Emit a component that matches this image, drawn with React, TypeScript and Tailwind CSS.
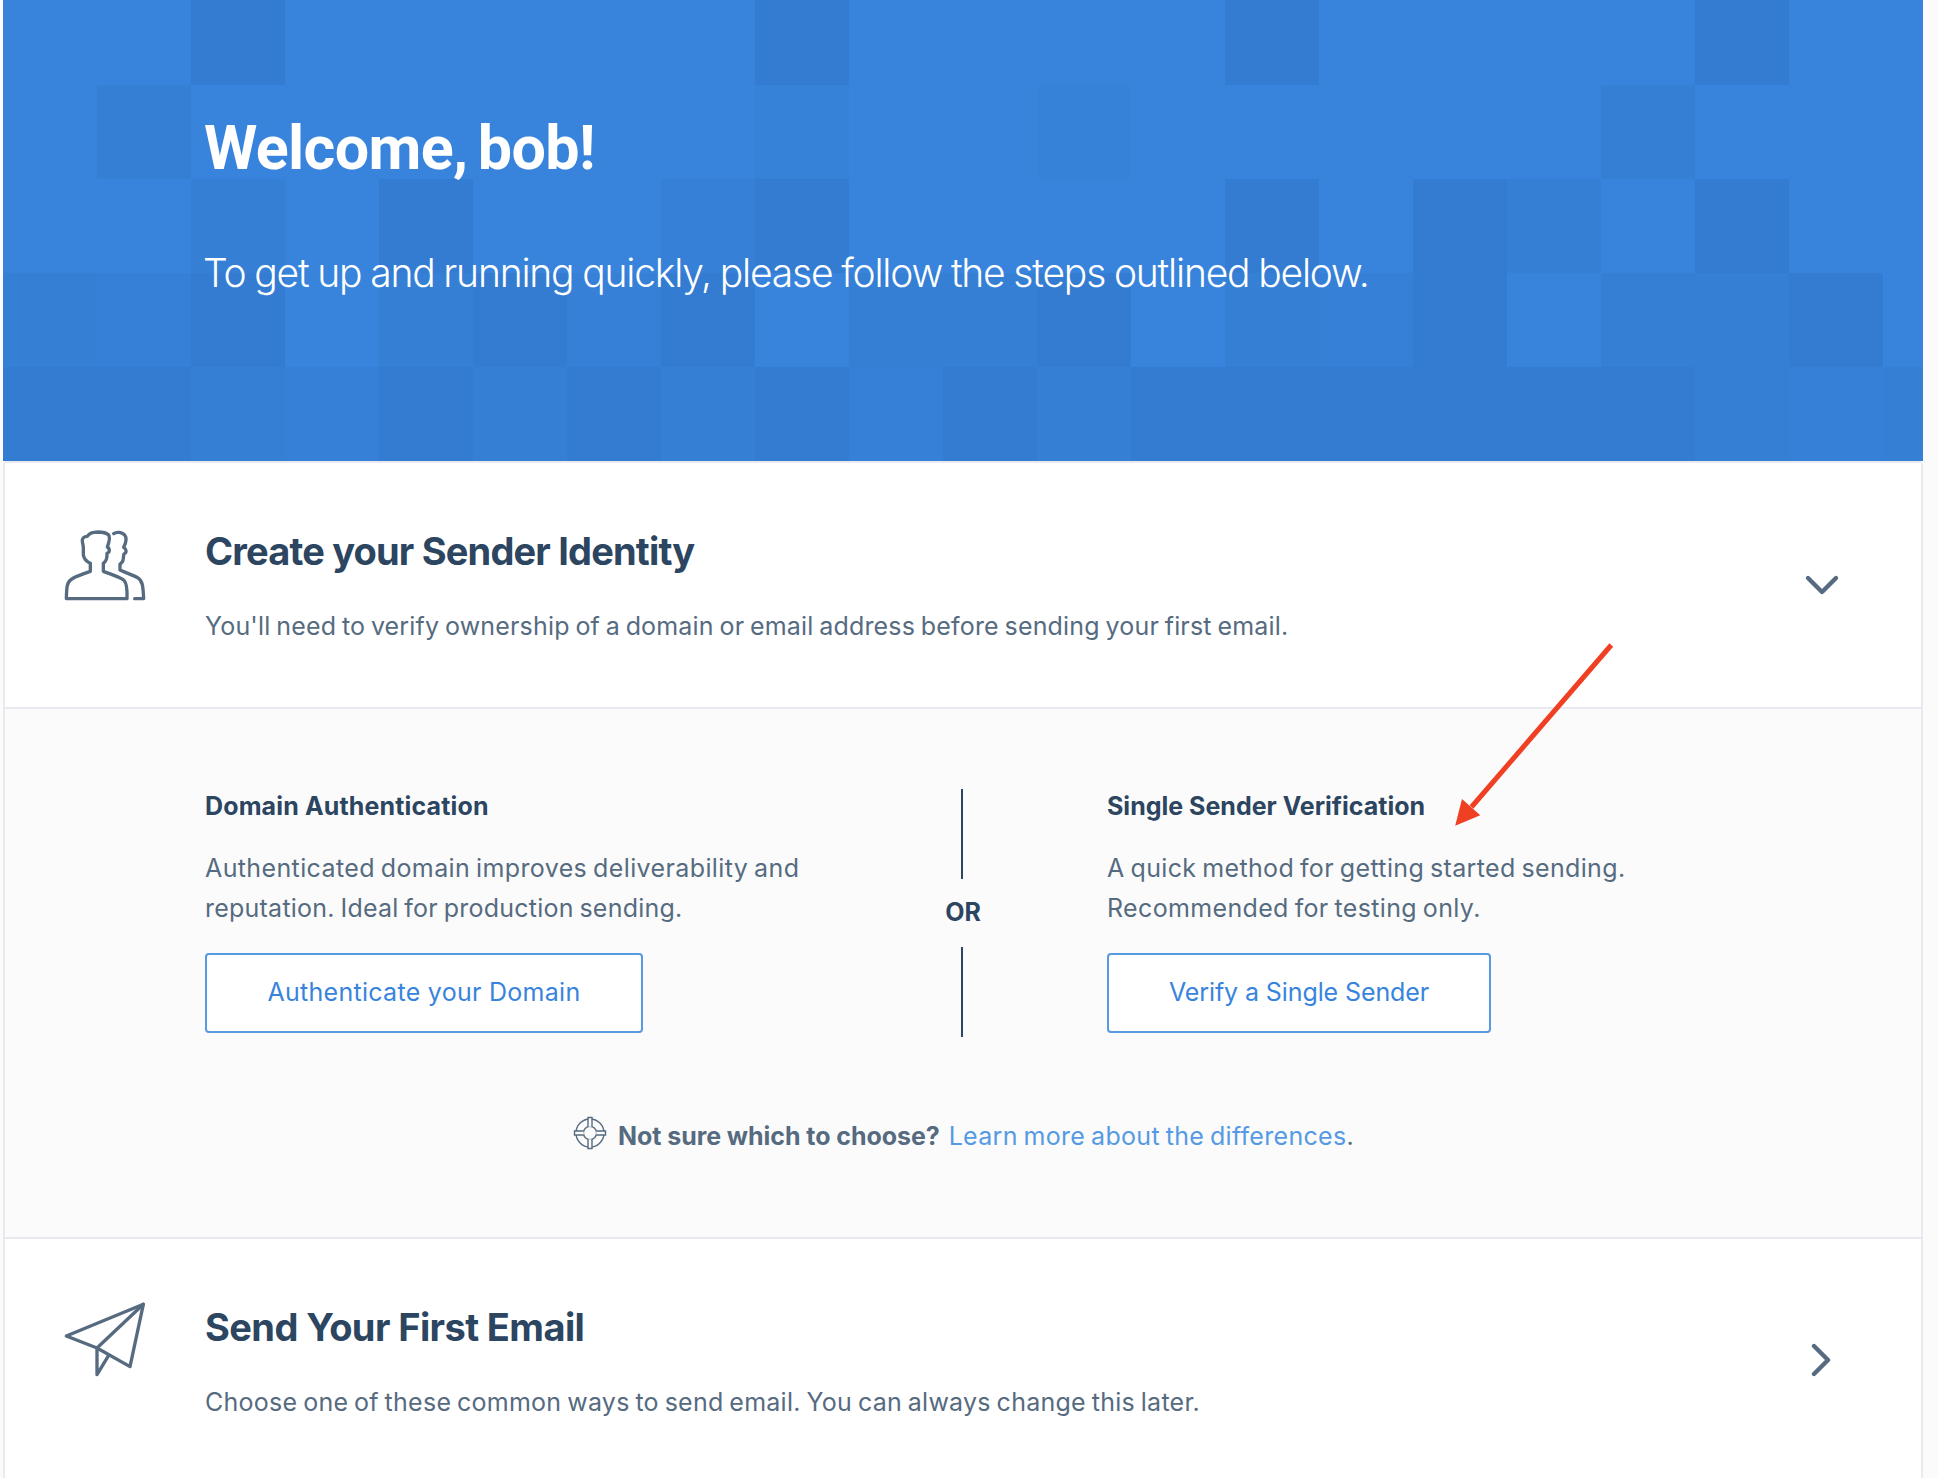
import React from "react";

const SHADES = [
  "bg-[#3884dc]",
  "bg-[#3782d9]",
  "bg-[#3680d7]",
  "bg-[#357fd4]",
  "bg-[#347cd1]",
];

// Darkness level of every 94px hero tile, row by row.
const TILES = [
  "004000004000040000400",
  "030000001001000003000",
  "003040024000040430400",
  "324034240334032403340",
  "443243434243444444323",
];

function HeroTiles() {
  return (
    <div className="absolute inset-x-0 bottom-0 grid grid-cols-[repeat(21,94px)] auto-rows-[94px]">
      {TILES.flatMap((row, r) =>
        row.split("").map((level, c) => (
          <div key={`${r}-${c}`} className={SHADES[Number(level)]} />
        )),
      )}
    </div>
  );
}

function PeopleIcon() {
  return (
    <svg
      viewBox="60 60 270 270"
      className="h-[90px] w-[90px] shrink-0"
      fill="none"
      stroke="#566b80"
      strokeWidth="10"
      strokeLinecap="round"
      strokeLinejoin="round"
    >
      <path d="M79 296H261C262 268 261 250 252 241C246 234 232 230 190 214V190C198 184 202 174 201 160C209 158 211 147 202 141C207 127 212 114 206 105C200 99 188 96 174 96C158 97 150 98 142 109C132 109 126 114 127 124L130 141V165C132 177 140 185 151 190V214C122 225 106 229 93 239C80 248 80 264 79 296Z" />
      <path d="M221 101C231 94 246 97 254 105C262 115 257 130 251 142C260 148 261 158 252 162C250 164 251 179 248 184L240 193V210C262 220 278 225 293 233C309 243 309 262 311 296H284" />
    </svg>
  );
}

function PlaneIcon() {
  return (
    <svg
      viewBox="60 60 270 240"
      className="h-20 w-[90px] shrink-0"
      fill="none"
      stroke="#566b80"
      strokeWidth="10"
      strokeLinecap="round"
      strokeLinejoin="round"
    >
      <path d="M79 168L310 73L270 260L171 204Z" />
      <path d="M310 73L171 204V284L206 226" />
    </svg>
  );
}

function LifebuoyIcon() {
  return (
    <svg
      viewBox="0 0 34 34"
      className="h-[34px] w-[34px] shrink-0"
      fill="none"
      stroke="#566b80"
      strokeWidth="1.4"
    >
      <circle cx="17" cy="17" r="14" />
      <circle cx="17" cy="17" r="6.6" />
      <g fill="#fbfbfb">
        <path d="M15 10.7V1.5H19V10.7" />
        <path d="M15 23.3V32.5H19V23.3" />
        <path d="M10.7 15H1.5V19H10.7" />
        <path d="M23.3 15H32.5V19H23.3" />
      </g>
    </svg>
  );
}

function Chevron({ d }: { d: string }) {
  return (
    <svg
      viewBox="0 0 36 36"
      className="h-9 w-9 shrink-0"
      fill="none"
      stroke="#566b80"
      strokeWidth="4.4"
      strokeLinecap="round"
      strokeLinejoin="round"
    >
      <path d={d} />
    </svg>
  );
}

type StepProps = {
  icon: React.ReactNode;
  title: React.ReactNode;
  text: React.ReactNode;
  chevron: string;
};

function Step({ icon, title, text, chevron }: StepProps) {
  return (
    <div className="flex h-[244px] items-center bg-white pr-[81px] pl-[55px]">
      <div className="flex grow items-start gap-[55px] self-start">
        {icon}
        <div className="pt-16">
          {title}
          {text}
        </div>
      </div>
      <Chevron d={chevron} />
    </div>
  );
}

export default function App() {
  return (
    <div className="relative h-[1478px] w-[1938px] overflow-hidden bg-[#fbfbfb] pl-[3px] font-['Inter',sans-serif] text-[25px] leading-10 text-[#566b80] [word-spacing:-1.5px]">
      <header className="relative h-[461px] w-[1920px] overflow-hidden bg-[#3884dc] text-white">
        <HeroTiles />
        <div className="relative pt-[112px] pl-[200px] whitespace-nowrap">
          <h1 className="pl-px font-['Roboto',sans-serif] text-[61px] leading-[72px] font-bold tracking-[-0.65px] [word-spacing:-4px]">
            Welcome, bob!
          </h1>
          <p className="mt-[65px] text-[39px] leading-[48px] font-light tracking-[-1.18px] [word-spacing:-1px]">
            To get up and running quickly, please follow the steps outlined below.
          </p>
        </div>
      </header>

      <main className="w-[1920px] rounded-t-[4px] border-2 border-[#e9eaf0] bg-white whitespace-nowrap">
        <Step
          icon={<div className="pt-[57px]"><PeopleIcon /></div>}
          title={
            <h2 className="text-[38px] leading-[48px] font-bold tracking-[-0.82px] text-[#2c4560] [word-spacing:0px]">
              Create your Sender Identity
            </h2>
          }
          text={
            <p className="mt-[31px] tracking-[0.18px]">
              You'll need to verify ownership of a domain or email address before sending your first email.
            </p>
          }
          chevron="M4 11L18 25L32 11"
        />

        <section className="h-[532px] border-y-2 border-[#e9eaf0] bg-[#fbfbfb] pt-20">
          <div className="flex h-[248px] pl-[200px]">
            <div className="w-[700px] pt-px">
              <h3 className="leading-8 font-bold tracking-[0.14px] text-[#2c4560] [word-spacing:0px]">
                Domain Authentication
              </h3>
              <p className="mt-[26px] tracking-[0.38px]">
                Authenticated domain improves deliverability and
                <br />
                <span className="tracking-[0.23px]">reputation. Ideal for production sending.</span>
              </p>
              <button className="mt-[25px] flex h-20 w-[438px] items-center justify-center rounded-[4px] border-2 border-[#559ae2] bg-white pb-[2px] tracking-[0.28px] text-[#3884dc]">
                Authenticate your Domain
              </button>
            </div>

            <div className="flex w-[114px] flex-col items-center font-bold text-[#2c4560]">
              <div className="h-[90px] w-[2px] bg-[#2c4560]" />
              <span className="h-[68px] pl-[2px] leading-[66px]">OR</span>
              <div className="h-[90px] w-[2px] bg-[#2c4560]" />
            </div>

            <div className="ml-[88px] pt-px">
              <h3 className="leading-8 font-bold text-[#2c4560] [word-spacing:0px]">
                Single Sender Verification
              </h3>
              <p className="mt-[26px] tracking-[0.35px]">
                A quick method for getting started sending.
                <br />
                Recommended for testing only.
              </p>
              <button className="mt-[25px] flex h-20 w-[384px] items-center justify-center rounded-[4px] border-2 border-[#559ae2] bg-white pb-[2px] tracking-[-0.1px] text-[#3884dc]">
                Verify a Single Sender
              </button>
            </div>
          </div>

          <div className="mt-[79px] flex pl-[568px]">
            <LifebuoyIcon />
            <strong className="ml-[11px] font-bold tracking-[-0.06px] [word-spacing:0px]">
              Not sure which to choose?
            </strong>
            <span className="ml-[9px] tracking-[0.3px]">
              <a className="text-[#559ae2]">Learn more about the differences</a>.
            </span>
          </div>
        </section>

        <Step
          icon={<div className="pt-[61px]"><PlaneIcon /></div>}
          title={
            <h2 className="text-[38px] leading-[48px] font-bold tracking-[-0.6px] text-[#2c4560] [word-spacing:0px]">
              Send Your First Email
            </h2>
          }
          text={
            <p className="mt-[31px] tracking-[0.26px]">
              Choose one of these common ways to send email. You can always change this later.
            </p>
          }
          chevron="M10 3L24 17L10 31"
        />
      </main>

      <svg
        viewBox="0 0 170 190"
        className="absolute top-[640px] left-[1450px] h-[190px] w-[170px]"
        fill="#f04023"
      >
        <path d="M161.3 5L21.5 167" stroke="#f04023" strokeWidth="5" />
        <path d="M5.2 185.8L12 159L30.3 175.3Z" />
      </svg>
    </div>
  );
}
